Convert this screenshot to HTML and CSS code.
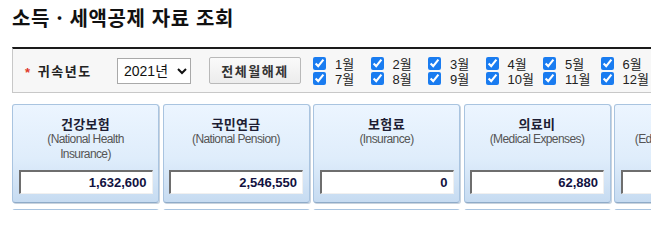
FILE: index.html
```html
<!DOCTYPE html>
<html lang="ko">
<head>
<meta charset="utf-8">
<title>소득·세액공제 자료 조회</title>
<link rel="stylesheet" href="styles.css">
</head>
<body>
<div class="page">
  <h1 class="title">소득 · 세액공제 자료 조회</h1>

  <div class="filter">
    <div class="label"><span class="star">*</span>귀속년도</div>
    <select class="year">
      <option>2021년</option>
    </select>
    <button class="btn" type="button">전체월해제</button>
    <div class="months">
      <label class="month"><input type="checkbox" checked><span>1월</span></label>
      <label class="month"><input type="checkbox" checked><span>2월</span></label>
      <label class="month"><input type="checkbox" checked><span>3월</span></label>
      <label class="month"><input type="checkbox" checked><span>4월</span></label>
      <label class="month"><input type="checkbox" checked><span>5월</span></label>
      <label class="month"><input type="checkbox" checked><span>6월</span></label>
      <label class="month"><input type="checkbox" checked><span>7월</span></label>
      <label class="month"><input type="checkbox" checked><span>8월</span></label>
      <label class="month"><input type="checkbox" checked><span>9월</span></label>
      <label class="month"><input type="checkbox" checked><span>10월</span></label>
      <label class="month"><input type="checkbox" checked><span>11월</span></label>
      <label class="month"><input type="checkbox" checked><span>12월</span></label>
    </div>
  </div>

  <div class="cards">
    <div class="card">
      <div class="card-head">
        <div class="card-title">건강보험</div>
        <div class="card-sub">(National Health<br>Insurance)</div>
      </div>
      <div class="value">1,632,600</div>
    </div>
    <div class="card">
      <div class="card-head">
        <div class="card-title">국민연금</div>
        <div class="card-sub">(National Pension)</div>
      </div>
      <div class="value">2,546,550</div>
    </div>
    <div class="card">
      <div class="card-head">
        <div class="card-title">보험료</div>
        <div class="card-sub">(Insurance)</div>
      </div>
      <div class="value">0</div>
    </div>
    <div class="card">
      <div class="card-head">
        <div class="card-title">의료비</div>
        <div class="card-sub">(Medical Expenses)</div>
      </div>
      <div class="value">62,880</div>
    </div>
    <div class="card">
      <div class="card-head">
        <div class="card-title">교육비</div>
        <div class="card-sub">(Education Expenses)</div>
      </div>
      <div class="value">0</div>
    </div>

    <div class="card card-next"></div>
    <div class="card card-next"></div>
    <div class="card card-next"></div>
    <div class="card card-next"></div>
    <div class="card card-next"></div>
  </div>
</div>
</body>
</html>
```

FILE: styles.css
```css
html, body {
  margin: 0;
  padding: 0;
  width: 651px;
  height: 210px;
  overflow: hidden;
  background: #ffffff;
}

.page {
  width: 780px;
  height: 210px;
  overflow: hidden;
  box-sizing: border-box;
  padding: 8px 0 0 12px;
  font-family: "Noto Sans CJK KR", "Liberation Sans", sans-serif;
  color: #222;
}

.title {
  margin: 0;
  height: 20px;
  font-size: 20px;
  line-height: 20px;
  font-weight: 700;
  color: #111;
  letter-spacing: 0.6px;
}

.filter {
  margin-top: 19px;
  height: 43px;
  box-sizing: content-box;
  border: 1px solid #c8c8c8;
  border-top: 2px solid #1a1a1a;
  background: #f7f7f7;
  display: flex;
  align-items: center;
  padding-left: 12px;
}

.label {
  font-size: 13px;
  font-weight: 700;
  letter-spacing: 1.6px;
  color: #222;
  display: flex;
  align-items: center;
  width: 92px;
}

.star {
  color: #e03a2a;
  font-family: "Liberation Sans", sans-serif;
  font-size: 13px;
  font-weight: 700;
  margin-right: 6px;
  position: relative;
  top: 2px;
}

.year {
  width: 74px;
  height: 26px;
  border: 1px solid #a9a9a9;
  border-radius: 0;
  background: #fff;
  font-family: "Liberation Sans", "Noto Sans CJK KR", sans-serif;
  font-size: 14px;
  color: #111;
  padding: 0 2px;
  margin-right: 18px;
}

.btn {
  width: 92px;
  height: 27px;
  border: 1px solid #b9b9b9;
  border-radius: 2px;
  background: linear-gradient(#fafafa, #ececec);
  font-family: "Noto Sans CJK KR", sans-serif;
  font-size: 13px;
  font-weight: 700;
  letter-spacing: 1.5px;
  color: #333;
  padding: 0;
  margin-right: 10px;
}

.months {
  display: grid;
  grid-template-columns: repeat(6, 57.5px);
  grid-auto-rows: 15px;
}

.month {
  display: flex;
  align-items: center;
  font-family: "Liberation Sans", "Noto Sans CJK KR", sans-serif;
  font-size: 13px;
  color: #222;
}

.month input {
  width: 13px;
  height: 13px;
  margin: 0 9px 0 2px;
  accent-color: #1a7cf0;
}

.cards {
  margin-top: 11px;
  display: grid;
  grid-template-columns: repeat(5, 147px);
  column-gap: 3.5px;
  row-gap: 6px;
}

.card {
  height: 97px;
  border: 1px solid #a9c4e0;
  border-bottom-color: #8fabc8;
  border-radius: 3px;
  background: linear-gradient(#ecf5ff 0%, #dfedfb 55%, #c6dbf1 100%);
  box-shadow: 1px 1px 0 #c9d3de;
  display: flex;
  flex-direction: column;
  align-items: center;
}

.card-head {
  height: 65px;
  text-align: center;
  padding-top: 11px;
  box-sizing: border-box;
}

.card-title {
  font-size: 13px;
  font-weight: 700;
  line-height: 16px;
  color: #1d1d33;
  letter-spacing: 0.3px;
}

.card-sub {
  font-family: "Liberation Sans Narrow", "Liberation Sans", sans-serif;
  font-size: 12px;
  line-height: 15px;
  color: #555;
  letter-spacing: -0.6px;
}

.value {
  width: 134px;
  height: 24px;
  box-sizing: border-box;
  border-style: solid;
  border-width: 2px 1px 1px 2px;
  border-color: #6e6e6e #f0f0f0 #f0f0f0 #6e6e6e;
  background: #fff;
  text-align: right;
  padding-right: 5px;
  font-family: "Liberation Sans", sans-serif;
  font-size: 13px;
  font-weight: 700;
  line-height: 21px;
  color: #12123f;
}
```
